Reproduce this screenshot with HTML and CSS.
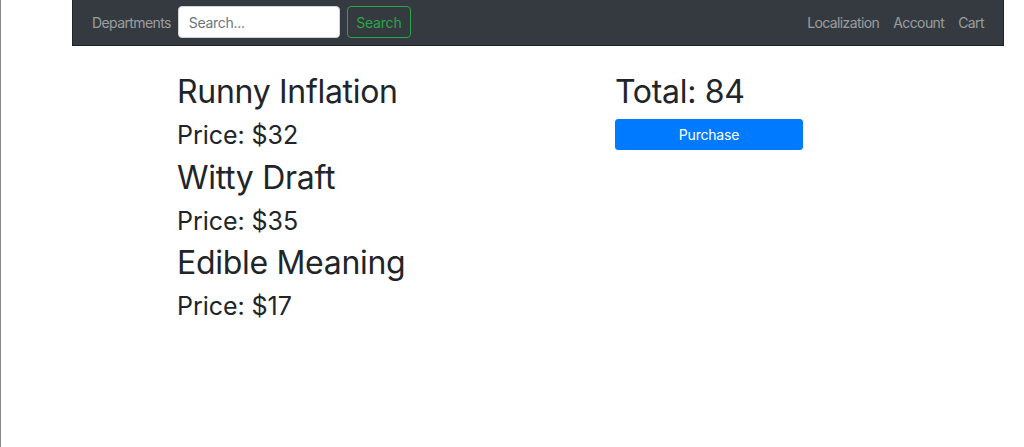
FILE: index.html
```html
<!DOCTYPE html>
<html lang="en">
<head>
<meta charset="utf-8">
<title>Shop</title>
<link rel="stylesheet" href="styles.css">
</head>
<body>
<div class="page">
  <nav class="navbar">
    <div class="nav-left">
      <a class="nav-link" href="#">Departments</a>
      <form class="search-form">
        <input class="search-input" type="text" placeholder="Search...">
        <button class="search-btn" type="button">Search</button>
      </form>
    </div>
    <div class="nav-right">
      <a class="nav-link" href="#">Localization</a>
      <a class="nav-link" href="#">Account</a>
      <a class="nav-link" href="#">Cart</a>
    </div>
  </nav>
  <main class="content">
    <section class="items">
      <h2 class="item-title">Runny Inflation</h2>
      <h4 class="item-price">Price: $32</h4>
      <h2 class="item-title">Witty Draft</h2>
      <h4 class="item-price">Price: $35</h4>
      <h2 class="item-title">Edible Meaning</h2>
      <h4 class="item-price">Price: $17</h4>
    </section>
    <section class="summary">
      <h2 class="item-title">Total: 84</h2>
      <button class="purchase-btn" type="button">Purchase</button>
    </section>
  </main>
</div>
</body>
</html>
```
FILE: styles.css
```css
* { box-sizing: border-box; }
html, body { margin: 0; padding: 0; height: 100%; }
body {
  font-family: Inter, "Liberation Sans", Arial, sans-serif;
  color: #212529;
  background: #fff;
  border-left: 1px solid #8a8a8a;
}
.page { padding-left: 71px; width: 1003px; }
.navbar {
  height: 46px;
  background: #343a40;
  border: 1px solid #1e222a;
  border-top: none;
  display: flex;
  justify-content: space-between;
  align-items: center;
  padding: 0 12px 1px 12px;
}
.nav-left, .nav-right { display: flex; align-items: center; }
.nav-link {
  color: rgba(255,255,255,.5);
  text-decoration: none;
  font-size: 14px;
  padding: 0 7px;
  letter-spacing: -0.6px;
}
.search-form { display: flex; align-items: center; gap: 7px; }
.search-input {
  width: 162px;
  height: 32px;
  border: 1px solid #ced4da;
  border-radius: 4px;
  background: #fff;
  padding: 0 10px;
  font-family: inherit;
  font-size: 14px;
  letter-spacing: -0.3px;
  color: #495057;
}
.search-input::placeholder { color: #6c757d; }
.search-btn {
  width: 64px;
  height: 32px;
  border: 1px solid #28a745;
  border-radius: 4px;
  background: transparent;
  color: #28a745;
  font-family: inherit;
  font-size: 14px;
  letter-spacing: -0.2px;
  padding: 0;
}
.content {
  display: flex;
  padding: 27px 0 0 105px;
}
.items { width: 438px; }
.summary { width: 188px; }
.item-title {
  font-size: 32px;
  font-weight: 400;
  line-height: 38px;
  margin: 0 0 10px 0;
  letter-spacing: -0.3px;
}
.item-price {
  font-size: 25px;
  font-weight: 400;
  line-height: 29px;
  margin: 0 0 8.5px 0;
  letter-spacing: -0.05px;
}
.summary .item-title { margin-bottom: 8px; }
.purchase-btn {
  width: 188px;
  height: 31px;
  background: #007bff;
  color: #fff;
  border: 1px solid #007bff;
  border-radius: 3px;
  font-family: inherit;
  font-size: 14px;
  letter-spacing: -0.2px;
  padding: 0;
}
```
